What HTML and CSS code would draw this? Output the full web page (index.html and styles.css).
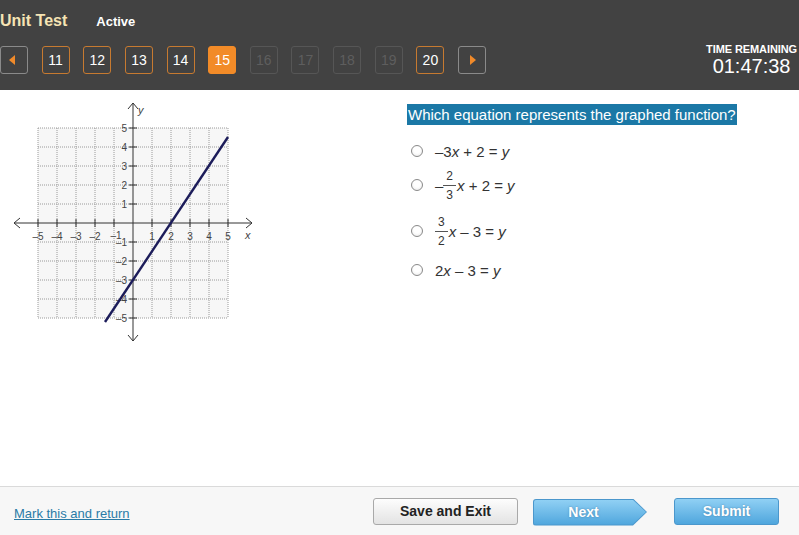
FILE: index.html
```html
<!DOCTYPE html>
<html>
<head>
<meta charset="utf-8">
<link rel="stylesheet" href="styles.css">
</head>
<body>
<div class="page">
  <header class="header">
    <div class="title-row">
      <span class="title">Unit Test</span>
      <span class="status">Active</span>
    </div>
    <div class="nav-row">
      <div class="nav">
        <div class="nb arrow"><span class="tri-left"></span></div>
        <div class="nb done">11</div>
        <div class="nb done">12</div>
        <div class="nb done">13</div>
        <div class="nb done">14</div>
        <div class="nb current">15</div>
        <div class="nb off">16</div>
        <div class="nb off">17</div>
        <div class="nb off">18</div>
        <div class="nb off">19</div>
        <div class="nb done">20</div>
        <div class="nb arrow"><span class="tri-right"></span></div>
      </div>
      <div class="timer">
        <div class="timer-label">TIME REMAINING</div>
        <div class="timer-value">01:47:38</div>
      </div>
    </div>
  </header>

  <main class="main">
    <div class="graph-col">
      <svg class="graph" width="260" height="248" viewBox="0 0 260 248">
        <rect x="38" y="30" width="190" height="190" fill="#f7f7f7"/>
        <path class="grid" d="M38 30V220M57 30V220M76 30V220M95 30V220M114 30V220M152 30V220M171 30V220M190 30V220M209 30V220M228 30V220M38 30H228M38 49H228M38 68H228M38 87H228M38 106H228M38 144H228M38 163H228M38 182H228M38 201H228M38 220H228"/>
        <path class="axis" d="M14 125H252M20 120L14 125L20 130M246 120L252 125L246 130M133 5V243M128 11L133 5L138 11M128 237L133 243L138 237"/>
        <path class="axis" d="M38 121V129M57 121V129M76 121V129M95 121V129M114 121V129M152 121V129M171 121V129M190 121V129M209 121V129M228 121V129M129 30H137M129 49H137M129 68H137M129 87H137M129 106H137M129 144H137M129 163H137M129 182H137M129 201H137M129 220H137"/>
        <g class="lbl" text-anchor="middle">
          <text x="38" y="142">–5</text>
          <text x="57" y="142">–4</text>
          <text x="76" y="142">–3</text>
          <text x="95" y="142">–2</text>
          <text x="116" y="141">–1</text>
          <text x="152" y="142">1</text>
          <text x="171" y="142">2</text>
          <text x="190" y="142">3</text>
          <text x="209" y="142">4</text>
          <text x="228" y="142">5</text>
        </g>
        <g class="lbl" text-anchor="end">
          <text x="127" y="33.5">5</text>
          <text x="127" y="52.5">4</text>
          <text x="127" y="71.5">3</text>
          <text x="127" y="90.5">2</text>
          <text x="127" y="109.5">1</text>
          <text x="127" y="148">–1</text>
          <text x="127" y="166.5">–2</text>
          <text x="127" y="185.5">–3</text>
          <text x="127" y="204.5">–4</text>
          <text x="127" y="223.5">–5</text>
        </g>
        <text class="lbl var" x="138" y="16">y</text>
        <text class="lbl var" x="245" y="141">x</text>
        <path class="fn" d="M105 224L228 39"/>
      </svg>
    </div>

    <div class="q-col">
      <div class="question">Which equation represents the graphed function?</div>
      <div class="options">
        <div class="opt r1"><span class="radio"></span><span class="eq">–3<i>x</i> + 2 = <i>y</i></span></div>
        <div class="opt r2"><span class="radio"></span><span class="eq"><span class="neg">–</span><span class="frac"><span class="num">2</span><span class="den">3</span></span><i>x</i> + 2 = <i>y</i></span></div>
        <div class="opt r3"><span class="radio"></span><span class="eq"><span class="frac"><span class="num">3</span><span class="den">2</span></span><i>x</i> – 3 = <i>y</i></span></div>
        <div class="opt r4"><span class="radio"></span><span class="eq">2<i>x</i> – 3 = <i>y</i></span></div>
      </div>
    </div>
  </main>

  <footer class="footer">
    <a class="mark" href="#">Mark this and return</a>
    <div class="actions">
      <div class="btn btn-save">Save and Exit</div>
      <div class="btn-next"><div class="btn-next-inner">Next</div></div>
      <div class="btn btn-submit">Submit</div>
    </div>
  </footer>
</div>
</body>
</html>
```

FILE: styles.css
```css
* { box-sizing: border-box; }
html, body { margin: 0; padding: 0; }
body {
  font-family: "Liberation Sans", Arial, sans-serif;
  background: #fff;
}
.page {
  width: 799px;
  height: 535px;
  display: flex;
  flex-direction: column;
  overflow: hidden;
}

/* header */
.header {
  height: 90px;
  background: #424242;
  flex: none;
}
.title-row {
  padding-top: 11px;
  display: flex;
  align-items: baseline;
  line-height: 20px;
}
.title {
  color: #f6e4b4;
  font-weight: bold;
  font-size: 16px;
}
.status {
  color: #fff;
  font-weight: bold;
  font-size: 13px;
  margin-left: 29px;
}
.nav-row {
  margin-top: 14px;
  display: flex;
  align-items: flex-start;
  justify-content: space-between;
  padding-right: 2px;
}
.nav {
  display: flex;
  gap: 13.65px;
}
.nb {
  width: 28px;
  height: 28px;
  border: 1px solid #c77a30;
  border-radius: 3px;
  display: flex;
  align-items: center;
  justify-content: center;
  color: #fff;
  font-size: 14px;
}
.nb.arrow { border-color: #8a8a8a; }
.nb.current { background: #f28b28; border-color: #f28b28; }
.nb.off { border-color: #565656; color: #5e5e5e; }
.tri-left, .tri-right {
  width: 0; height: 0;
  border-top: 5px solid transparent;
  border-bottom: 5px solid transparent;
}
.tri-left { border-right: 6px solid #f08a2a; margin-left: -4px; }
.tri-right { border-left: 6px solid #f08a2a; margin-left: 2px; }
.timer {
  margin-top: -3px;
  display: flex;
  flex-direction: column;
  align-items: center;
  color: #fff;
}
.timer-label {
  font-size: 11px;
  font-weight: bold;
  line-height: 12px;
  letter-spacing: -0.1px;
}
.timer-value {
  font-size: 20px;
  line-height: 22px;
}

/* main */
.main {
  flex: 1;
  display: grid;
  grid-template-columns: 407px 1fr;
}
.graph-col { padding-top: 8px; }
.graph { display: block; }
.grid { fill: none; stroke: #9a9a9a; stroke-width: 1; stroke-dasharray: 1 1; }
.axis { fill: none; stroke: #333; stroke-width: 1; }
.lbl { font-family: "Liberation Sans", Arial, sans-serif; font-size: 10px; fill: #444; }
.var { font-style: italic; font-size: 11px; }
.fn { stroke: #1c1c5a; stroke-width: 2.4; fill: none; }

.q-col { padding-top: 14px; }
.question {
  display: inline-block;
  background: #1b78a6;
  color: #fff;
  font-size: 15px;
  line-height: 21px;
  padding: 0 1px;
}
.options {
  margin-top: 14px;
  display: flex;
  flex-direction: column;
}
.opt {
  display: flex;
  align-items: center;
  padding-left: 4px;
  color: #333;
  font-size: 15px;
}
.r1 { height: 24px; }
.r2 { height: 44px; }
.r3 { height: 48px; }
.r4 { height: 30px; }
.radio {
  width: 12px;
  height: 12px;
  border: 1px solid #8a8a8a;
  border-radius: 50%;
  background: radial-gradient(circle at 50% 40%, #fff 40%, #e6e6e6);
  flex: none;
}
.eq {
  margin-left: 12px;
  display: flex;
  align-items: center;
  white-space: pre;
}
.eq i { font-style: italic; }
.neg { margin-right: 0; }
.frac {
  display: inline-flex;
  flex-direction: column;
  align-items: stretch;
  text-align: center;
  font-size: 12px;
  line-height: 13px;
  margin: 2px 1px 0 0;
}
.num { border-bottom: 1px solid #555; padding: 0 3px 2px; }
.den { padding: 3px 3px 0; }

/* footer */
.footer {
  flex: none;
  height: 49px;
  border-top: 1px solid #dadada;
  background: #f7f7f7;
  display: flex;
  align-items: center;
  justify-content: space-between;
  padding: 0 20px 0 14px;
}
.mark {
  color: #2a7ba6;
  font-size: 13px;
  text-decoration: underline;
  margin-top: 4px;
}
.actions {
  display: flex;
  align-items: center;
}
.btn {
  height: 27px;
  border-radius: 3px;
  display: flex;
  align-items: center;
  justify-content: center;
  font-weight: bold;
  font-size: 14px;
}
.btn-save {
  width: 145px;
  border: 1px solid #a9a9a9;
  background: linear-gradient(#fdfdfd, #e3e3e3);
  color: #222;
}
.btn-next {
  width: 114px;
  height: 27px;
  margin-left: 15px;
  margin-top: 2px;
  padding: 1px;
  border-radius: 3px;
  background: #4b97cc;
  display: flex;
  clip-path: polygon(0 0, calc(100% - 14px) 0, 100% 50%, calc(100% - 14px) 100%, 0 100%);
}
.btn-next-inner {
  flex: 1;
  border-radius: 2px;
  background: linear-gradient(#90d0f4, #4fa6dd);
  clip-path: polygon(0 0, calc(100% - 13.5px) 0, 100% 50%, calc(100% - 13.5px) 100%, 0 100%);
  color: #fff;
  font-weight: bold;
  font-size: 14px;
  display: flex;
  align-items: center;
  justify-content: center;
  padding-right: 13px;
  text-shadow: 0 0 2px rgba(40, 90, 130, 0.6);
}
.btn-submit {
  width: 105px;
  margin-left: 27px;
  border: 1px solid #4b97cc;
  background: linear-gradient(#90d0f4, #4fa6dd);
  color: #fff;
  text-shadow: 0 0 2px rgba(40, 90, 130, 0.6);
}
```
